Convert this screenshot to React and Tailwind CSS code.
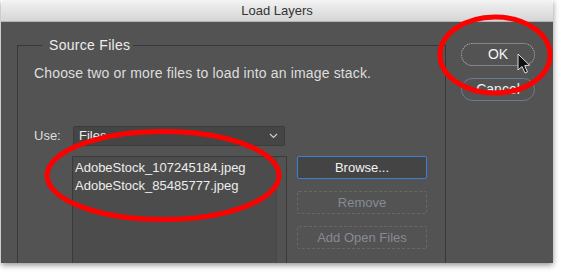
// Dialog "Load Layers" ala Photoshop, dengan anotasi lingkaran merah
const font = { fontFamily: '"Liberation Sans", Arial, sans-serif' };

const files = ["AdobeStock_107245184.jpeg", "AdobeStock_85485777.jpeg"];

const Annotations = () => (
  <svg
    className="absolute inset-0 pointer-events-none"
    width="561"
    height="273"
    viewBox="0 0 561 273"
  >
    {/* lingkaran di tombol OK */}
    <ellipse cx="495" cy="55" rx="55" ry="38" fill="none" stroke="#ff0000" strokeWidth="5" />
    {/* lingkaran di daftar file */}
    <ellipse cx="163" cy="175.5" rx="116" ry="44" fill="none" stroke="#ff0000" strokeWidth="5" />
    {/* kursor */}
    <path
      d="M518 54 L518 70 L522 66.5 L525 73 L527.5 72 L524.7 65.6 L529.5 65.2 Z"
      fill="#111"
      stroke="#ddd"
      strokeWidth="1"
      strokeLinejoin="round"
    />
  </svg>
);

export default function App() {
  return (
    <div className="relative w-[561px] h-[273px] bg-white overflow-hidden" style={font}>
      <div className="ml-[1px] w-[552px] flex flex-col shadow-[0_2px_6px_rgba(0,0,0,0.45)]">
        {/* title bar */}
        <div className="h-[22px] flex items-center justify-center bg-gradient-to-b from-[#f3f3f3] to-[#d5d5d5] border-b border-[#b4b4b4] text-[13px] text-[#333] rounded-t-[4px]">
          Load Layers
        </div>

        <div className="h-[241px] bg-[#535353] flex pl-[16px] overflow-hidden">
          <fieldset className="mt-[15px] w-[429px] h-[260px] border border-b-0 border-[#383838] pl-[16px] shrink-0">
            <legend className="ml-[8px] pl-[7px] pr-[3px] text-[14px] leading-[16px] tracking-[0.3px] text-[#ececec]">
              Source Files
            </legend>
            <p className="mt-[12px] text-[14px] leading-[16px] tracking-[0.15px] text-[#dedede]">
              Choose two or more files to load into an image stack.
            </p>

            <div className="mt-[45px] flex items-center">
              <span className="w-[39px] text-[13px] text-[#dedede]">Use:</span>
              <div className="w-[212px] h-[20px] flex items-center justify-between pl-[5px] pr-[6px] bg-[#454545] border border-[#3b3b3b] rounded-[2px] text-[13px] text-[#ececec]">
                <span>Files</span>
                <svg width="9" height="6" viewBox="0 0 9 6">
                  <path d="M1 1 L4.5 4.5 L8 1" fill="none" stroke="#cfcfcf" strokeWidth="1.2" />
                </svg>
              </div>
            </div>

            <div className="mt-[10px] flex">
              <div className="ml-[38px] w-[215px] h-[120px] flex bg-[#4c4c4c] border border-[#3a3a3a]">
                <div className="flex-1 pl-[2px] pt-[2px] text-[13px] leading-[18px] text-[#ececec]">
                  {files.map((f) => (
                    <div key={f}>{f}</div>
                  ))}
                </div>
                <div className="w-[10px] bg-[#525252] border-l border-[#474747]" />
              </div>

              <div className="ml-[10px] w-[130px] flex flex-col gap-[12px] text-[13px]">
                <button className="h-[23px] bg-[#444444] border border-[#3d7fd6] rounded-[2px] text-[#f3f3f3]">
                  Browse...
                </button>
                <button className="h-[23px] border border-dashed border-[#686868] rounded-[2px] text-[#868b94]">
                  Remove
                </button>
                <button className="h-[23px] border border-dashed border-[#686868] rounded-[2px] text-[#868b94]">
                  Add Open Files
                </button>
              </div>
            </div>
          </fieldset>

          <div className="ml-[15px] mt-[21px] w-[74px] flex flex-col gap-[12px] text-[14px]">
            <button className="h-[23px] rounded-full border border-dotted border-[#b8b8b8] text-[#f4f4f4]">
              OK
            </button>
            <button className="h-[23px] rounded-full border border-[#6d7c8c] text-[#f4f4f4]">
              Cancel
            </button>
          </div>
        </div>
      </div>

      <Annotations />
    </div>
  );
}
